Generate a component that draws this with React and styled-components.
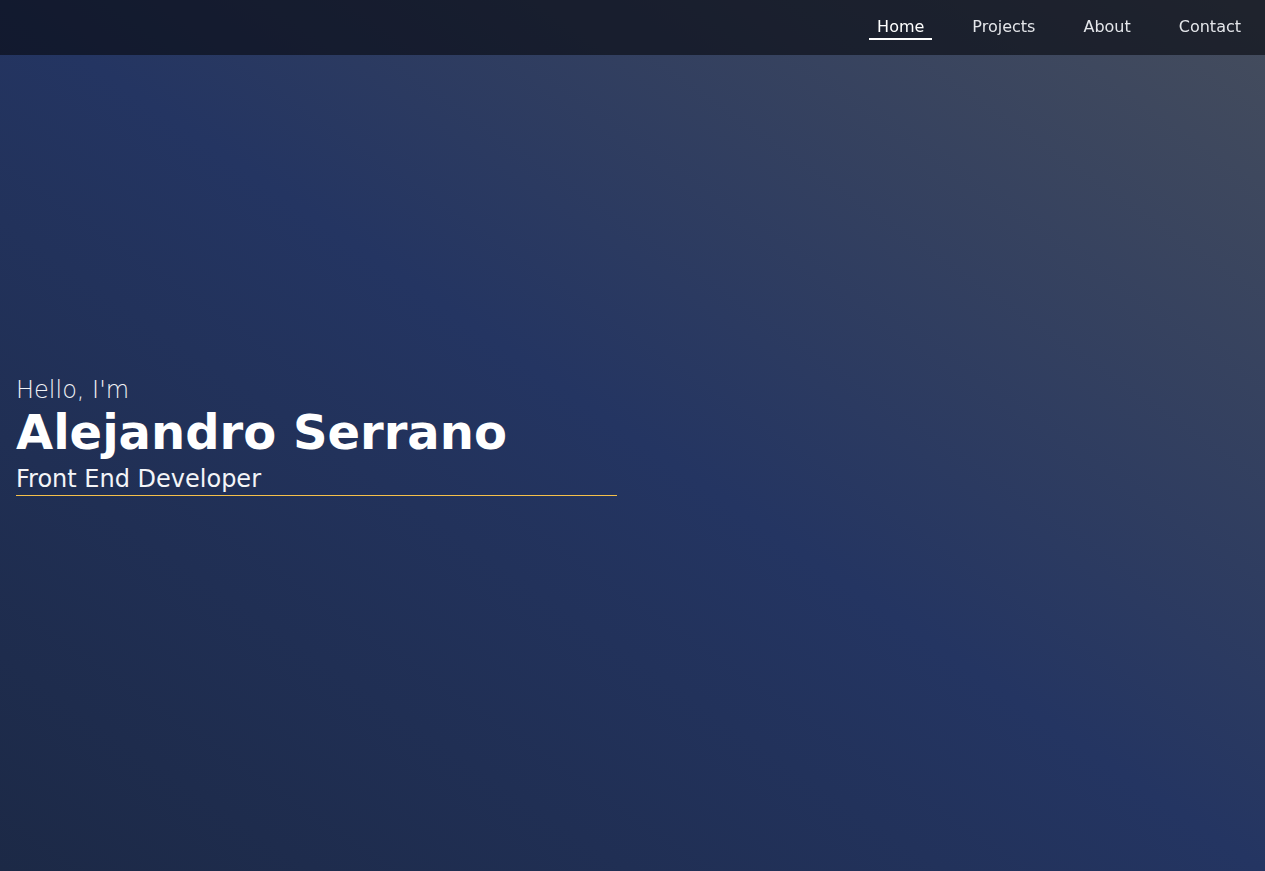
import styled, { createGlobalStyle } from "styled-components"

const GlobalStyle = createGlobalStyle`
    html, body {
        margin: 0;
        padding: 0;
    }
    body {
        font-family: "DejaVu Sans", "Liberation Sans", sans-serif;
        background-color: #1e2a4a;
        color: #fff;
    }
    * {
        box-sizing: border-box;
    }
`
const NavBarStyle = styled.nav`
    position: fixed;
    top: 0;
    left: 0;
    right: 0;
    height: 55px;
    display: flex;
    align-items: center;
    justify-content: flex-end;
    gap: 32px;
    padding: 0 16px;
    background-color: rgba(8, 10, 16, 0.62);
    z-index: 10;
`
const NavLink = styled.a`
    font-size: 16px;
    color: ${({ $active }) => ($active ? "#ffffff" : "#e4e6ea")};
    text-decoration: none;
    padding: 2px 8px;
    border-bottom: 2px solid ${({ $active }) => ($active ? "#ffffff" : "transparent")};
    cursor: pointer;
`
const Hero = styled.section`
    height: 100vh;
    display: flex;
    flex-direction: column;
    justify-content: center;
    padding: 0 16px;
    background: linear-gradient(to top right, #1c2946 0%, #243562 50%, #454d5d 100%);
`
const Greeting = styled.p`
    margin: 0;
    font-size: 24px;
    font-weight: 200;
    color: #f2f3f6;
`
const Name = styled.h1`
    margin: 0;
    font-size: 48px;
    font-weight: 700;
    color: #ffffff;
`
const Role = styled.h2`
    margin: 5px 0 0;
    width: 601px;
    padding-bottom: 2px;
    font-size: 24px;
    font-weight: 400;
    color: #f4f5f8;
    border-bottom: 1px solid #f5c04a;
`

const NavBar = () => {
    return <NavBarStyle>
        <NavLink $active>Home</NavLink>
        <NavLink>Projects</NavLink>
        <NavLink>About</NavLink>
        <NavLink>Contact</NavLink>
    </NavBarStyle>
}

const App = () => {
    return <>
        <GlobalStyle />
        <NavBar />
        <Hero>
            <Greeting>Hello, I'm</Greeting>
            <Name>Alejandro Serrano</Name>
            <Role>Front End Developer</Role>
        </Hero>
    </>
}

export default App
